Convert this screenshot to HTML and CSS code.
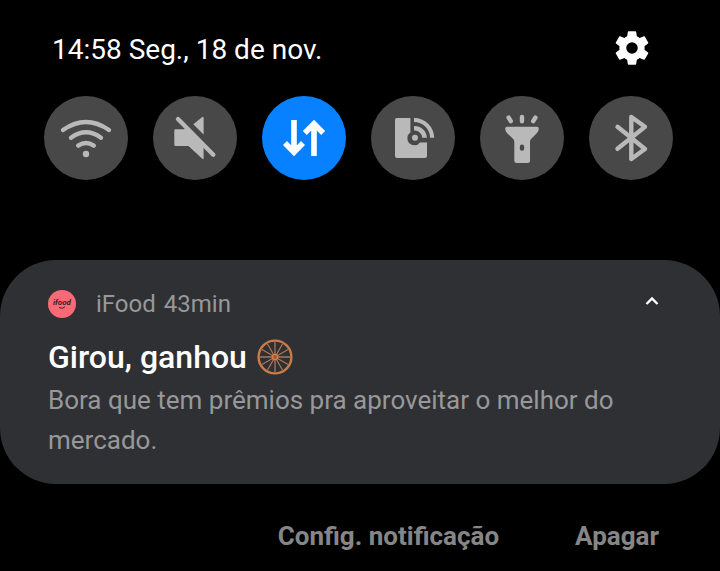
FILE: index.html
```html
<!DOCTYPE html>
<html lang="pt-BR">

<head>
    <meta charset="UTF-8">
    <meta name="viewport" content="width=device-width, initial-scale=1">
    <title>Notificações</title>
    <link rel="stylesheet" href="styles.css">
</head>

<body>
    <header class="status">
        <div class="datetime">14:58 Seg., 18 de nov.</div>
        <button class="settings" aria-label="Configurações">
            <svg viewBox="0 0 24 24" width="42" height="42" fill="#fff">
                <path d="M19.14 12.94c.04-.3.06-.61.06-.94 0-.32-.02-.64-.07-.94l2.03-1.58c.18-.14.23-.41.12-.61l-1.92-3.32c-.12-.22-.37-.29-.59-.22l-2.39.96c-.5-.38-1.03-.7-1.62-.94l-.36-2.54c-.04-.24-.24-.41-.48-.41h-3.84c-.24 0-.43.17-.47.41l-.36 2.54c-.59.24-1.13.57-1.62.94l-2.39-.96c-.22-.08-.47 0-.59.22L2.74 8.87c-.12.21-.08.47.12.61l2.03 1.58c-.05.3-.09.63-.09.94s.02.64.07.94l-2.03 1.58c-.18.14-.23.41-.12.61l1.92 3.32c.12.22.37.29.59.22l2.39-.96c.5.38 1.03.7 1.62.94l.36 2.54c.05.24.24.41.48.41h3.84c.24 0 .44-.17.47-.41l.36-2.54c.59-.24 1.13-.56 1.62-.94l2.39.96c.22.08.47 0 .59-.22l1.92-3.32c.12-.22.07-.47-.12-.61l-2.01-1.58zM12 15.3a3.3 3.3 0 1 1 0-6.6 3.3 3.3 0 0 1 0 6.6z" />
            </svg>
        </button>
    </header>

    <div class="toggles">
        <button class="toggle" aria-label="Wi-Fi">
            <svg viewBox="0 0 84 84">
                <g class="line">
                    <path d="M19 34Q42 18 65 34" />
                    <path d="M27 41.7Q42 31 57 41.7" />
                    <path d="M34.2 49.6Q42 44.4 49.8 49.6" />
                </g>
                <circle cx="42" cy="58" r="3.2" />
            </svg>
        </button>
        <button class="toggle" aria-label="Som">
            <svg viewBox="0 0 84 84">
                <path d="M40.3 28.3L49 21.2Q50.6 20.2 50.6 22V38.5z" />
                <path d="M22.5 33.3H31L34 32L50.6 49V62Q50.6 64 49 62.6L35.5 50H22.5Q21.3 50 21.3 48.8V34.5Q21.3 33.3 22.5 33.3z" />
                <path class="line" d="M25 23L60.3 58.7" />
            </svg>
        </button>
        <button class="toggle on" aria-label="Dados móveis">
            <svg viewBox="0 0 84 84">
                <g class="arrows">
                    <path d="M32 24V57M23 47L32 56.2L41 47" />
                    <path d="M52 60V27M42.8 37L52 27.8L61.2 37" />
                </g>
            </svg>
        </button>
        <button class="toggle" aria-label="NFC">
            <svg viewBox="0 0 84 84">
                <path d="M25.8 22H39.4V36.5A7 7 0 1 0 49 46.4H56V60Q56 62 54 62H26Q24 62 24 60V24Q24 22 25.8 22z" />
                <path d="M43 22A20 20 0 0 1 63.2 41.8H59A16 16 0 0 0 43 26z" />
                <path d="M43 30A12.5 12.5 0 0 1 56 41.8H51.3A7.6 7.6 0 0 0 43 34.6z" />
                <circle cx="44" cy="41.7" r="3" />
            </svg>
        </button>
        <button class="toggle" aria-label="Lanterna">
            <svg viewBox="0 0 84 84">
                <path class="line" d="M28.6 21.6L30.8 25.2M42 21V25.2M55.4 21.6L53.2 25.2" />
                <path fill-rule="evenodd" d="M27 30.7H57Q58.8 30.7 58.8 32.5Q58.8 35 57 37L51 43Q50 44.2 50 46V64.5Q50 67 47.5 67H36.8Q34.3 67 34.3 64.5V46Q34.3 44.2 33.2 43L27 37Q25.2 35 25.2 32.5Q25.2 30.7 27 30.7zM42 48.6Q39.8 48.6 39.8 51V52.5Q39.8 54.8 42 54.8Q44.2 54.8 44.2 52.5V51Q44.2 48.6 42 48.6z" />
            </svg>
        </button>
        <button class="toggle" aria-label="Bluetooth">
            <svg viewBox="0 0 84 84">
                <path class="line" d="M28.5 30.8L56 53L42.3 63V21L56 30.8L28.5 52.8" />
            </svg>
        </button>
    </div>

    <main class="card">
        <div class="card-top">
            <svg class="logo" viewBox="0 0 28 28" width="28" height="28">
                <circle cx="14" cy="14" r="14" fill="#fa6a76" />
                <text x="14" y="15" text-anchor="middle">ifood</text>
                <path d="M11 17.5Q14.5 19.5 17 16.8" fill="none" stroke="#3a1c28" />
            </svg>
            <span class="app">iFood</span>
            <span class="time">43min</span>
            <button class="collapse" aria-label="Recolher">
                <svg viewBox="0 0 24 24" width="24" height="24">
                    <path d="M6.5 15L12 9.4L17.5 15" fill="none" stroke="#fff" stroke-width="2.4" />
                </svg>
            </button>
        </div>
        <h1 class="title">Girou, ganhou
            <svg class="wheel" viewBox="0 0 36 36" width="36" height="36">
                <g stroke="#a8755a" stroke-width="1.3">
                    <path d="M18 3V33M3 18H33M10.5 5L25.5 31M25.5 5L10.5 31M5 10.5L31 25.5M31 10.5L5 25.5" />
                </g>
                <circle cx="18" cy="18" r="16.4" fill="none" stroke="#c97c48" stroke-width="2.4" />
                <circle cx="18" cy="18" r="2.6" fill="#a8552c" stroke="#d08450" stroke-width="1.4" />
            </svg>
        </h1>
        <p class="message">Bora que tem prêmios pra aproveitar o melhor do mercado.</p>
    </main>

    <footer class="actions">
        <button>Config. notificação</button>
        <button>Apagar</button>
    </footer>
</body>

</html>
```

FILE: styles.css
```css
* {
    box-sizing: border-box;
}

body {
    margin: 0;
    background: #000;
    color: #fff;
    font-family: Roboto, sans-serif;
}

button {
    border: none;
    padding: 0;
    background: none;
    color: inherit;
    font-family: inherit;
    cursor: pointer;
}

svg {
    display: block;
}

.status {
    display: flex;
    justify-content: space-between;
    align-items: center;
    height: 96px;
    padding: 0 67px 0 52px;
}

.datetime {
    padding-top: 4px;
    font-size: 28px;
    line-height: 36px;
}

.toggles {
    display: flex;
    justify-content: space-between;
    padding: 0 47px 0 44px;
    margin-bottom: 80px;
}

.toggle {
    width: 84px;
    height: 84px;
    border-radius: 50%;
    background: #484848;
    fill: #b9b9b9;
}

.toggle.on {
    background: #0781ff;
}

.line {
    fill: none;
    stroke: #b9b9b9;
    stroke-width: 4.4;
    stroke-linecap: round;
    stroke-linejoin: round;
}

.arrows {
    fill: none;
    stroke: #fff;
    stroke-width: 5.6;
}

.card {
    padding: 24px 48px;
    border-radius: 56px;
    background: #2f3033;
}

.card-top {
    display: flex;
    align-items: center;
    height: 40px;
    color: #98989a;
    font-size: 24px;
}

.logo text {
    font: italic bold 8px Roboto, sans-serif;
    fill: #3a1c28;
}

.app {
    margin-left: 20px;
}

.time {
    margin-left: 8px;
}

.collapse {
    margin-left: auto;
    padding: 0 8px 6px 0;
}

.title {
    display: flex;
    align-items: center;
    gap: 10px;
    height: 46px;
    margin: 10px 0 0;
    font-size: 32px;
    font-weight: 500;
}

.message {
    margin: 0;
    color: #98989a;
    font-size: 26px;
    line-height: 40px;
}

.actions {
    display: flex;
    justify-content: flex-end;
    gap: 76px;
    padding: 34px 61px 0 48px;
    color: #868686;
}

.actions button {
    font-size: 26px;
    font-weight: 700;
    line-height: 36px;
}
```
